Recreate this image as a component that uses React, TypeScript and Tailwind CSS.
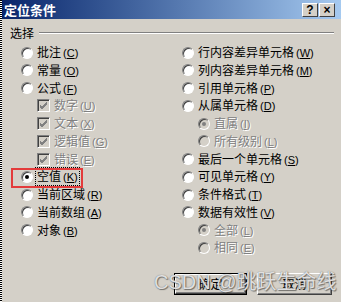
import React from 'react';

type Opt = { t: string; k: string; kind?: 'radio' | 'check'; sub?: boolean; on?: boolean; off?: boolean; focus?: boolean };

const left: Opt[] = [
  { t: '批注', k: 'C' },
  { t: '常量', k: 'O' },
  { t: '公式', k: 'F' },
  { t: '数字', k: 'U', kind: 'check', sub: true, on: true, off: true },
  { t: '文本', k: 'X', kind: 'check', sub: true, on: true, off: true },
  { t: '逻辑值', k: 'G', kind: 'check', sub: true, on: true, off: true },
  { t: '错误', k: 'E', kind: 'check', sub: true, on: true, off: true },
  { t: '空值', k: 'K', on: true, focus: true },
  { t: '当前区域', k: 'R' },
  { t: '当前数组', k: 'A' },
  { t: '对象', k: 'B' },
];

const right: Opt[] = [
  { t: '行内容差异单元格', k: 'W' },
  { t: '列内容差异单元格', k: 'M' },
  { t: '引用单元格', k: 'P' },
  { t: '从属单元格', k: 'D' },
  { t: '直属', k: 'I', sub: true, on: true, off: true },
  { t: '所有级别', k: 'L', sub: true, off: true },
  { t: '最后一个单元格', k: 'S' },
  { t: '可见单元格', k: 'Y' },
  { t: '条件格式', k: 'T' },
  { t: '数据有效性', k: 'V' },
  { t: '全部', k: 'L', sub: true, on: true, off: true },
  { t: '相同', k: 'E', sub: true, off: true },
];

const Radio = ({ on, off }: { on?: boolean; off?: boolean }) => (
  <span
    className={`relative inline-block h-[12px] w-[12px] shrink-0 rounded-full border border-t-[#808080] border-l-[#808080] border-b-white border-r-white shadow-[inset_1px_1px_0_#404040] ${off ? 'bg-[#d4d0c8]' : 'bg-white'}`}
  >
    {on && <span className={`absolute left-[3px] top-[3px] h-[4px] w-[4px] rounded-full ${off ? 'bg-[#808080]' : 'bg-black'}`} />}
  </span>
);

const Check = () => (
  <span className="relative inline-block h-[13px] w-[13px] shrink-0 border border-t-[#808080] border-l-[#808080] border-b-white border-r-white bg-[#d4d0c8] shadow-[inset_1px_1px_0_#404040]">
    <svg width="11" height="11" viewBox="0 0 11 11" className="absolute left-0 top-0">
      <path d="M2 5 L4 7 L9 2 M2 6 L4 8 L9 3 M2 7 L4 9 L9 4" stroke="#808080" strokeWidth="1" fill="none" />
    </svg>
  </span>
);

const Row = ({ o }: { o: Opt }) => (
  <div className={`flex h-[17.75px] items-center gap-[4px] ${o.sub ? 'pl-[16px]' : ''}`}>
    {o.kind === 'check' ? <Check /> : <Radio on={o.on} off={o.off} />}
    <span
      className={`flex items-baseline leading-[14px] ${o.off ? 'text-[#808080] [text-shadow:1px_1px_0_#fff]' : 'text-black'} ${o.focus ? 'outline-1 outline-dotted outline-black outline-offset-[1px]' : ''}`}
    >
      <span>{o.t}</span>
      <span className="ml-[2px] font-['Liberation_Sans',sans-serif] text-[11px]">
        (<u>{o.k}</u>)
      </span>
    </span>
  </div>
);

const Btn = ({ label, def }: { label: string; def?: boolean }) => (
  <div className={`${def ? 'border border-black' : ''} h-[22px]`}>
    <div
      className={`flex h-full items-center justify-center border border-t-white border-l-white border-b-[#404040] border-r-[#404040] bg-[#d4d0c8] shadow-[inset_-1px_-1px_0_#808080] text-[12px] ${def ? 'w-[71px]' : 'w-[75px]'}`}
    >
      {label}
    </div>
  </div>
);

export default function App() {
  return (
    <div className="relative h-[302px] w-[341px] overflow-hidden bg-[#d4d0c8] font-['Noto_Sans_CJK_SC',sans-serif] text-[12px]">
      <div className="flex h-[19px] items-center justify-between bg-linear-to-r from-[#0a246a] to-[#a6caf0] pl-[4px] pr-[6px]">
        <span className="text-[13px] font-bold leading-none text-white">定位条件</span>
        <div className="flex gap-[1px]">
          {['?', '×'].map((g) => (
            <div
              key={g}
              className="flex h-[14px] w-[16px] items-center justify-center border border-t-white border-l-white border-b-[#404040] border-r-[#404040] bg-[#d4d0c8] font-['Liberation_Sans',sans-serif] text-[12px] font-bold leading-none text-black"
            >
              {g}
            </div>
          ))}
        </div>
      </div>

      <div className="flex h-[16px] items-center pl-[10px] pr-[7px] pt-0 mt-[6px]">
        <span className="leading-[14px]">选择</span>
        <div className="ml-[5px] h-[2px] flex-1 border-t border-t-[#808080] border-b border-b-white" />
      </div>

      <div className="mt-[2.8px] grid grid-cols-[161px_1fr] pl-[21px]">
        <div>
          {left.map((o) => (
            <Row key={o.t} o={o} />
          ))}
        </div>
        <div>
          {right.map((o) => (
            <Row key={o.t} o={o} />
          ))}
        </div>
      </div>

      <div className="mt-[16px] flex justify-end gap-[10px] pr-[9px]">
        <Btn label="确定" def />
        <Btn label="取消" />
      </div>

      <div className="absolute left-0 top-0 h-full w-[2px] bg-[repeating-linear-gradient(to_bottom,#000_0_1px,#fff_1px_2px)]" />
      <div className="absolute left-[11px] top-[168px] h-[20px] w-[72px] border-2 border-[#e33b3b]" />
      <div className="pointer-events-none absolute left-[154px] top-[270px] text-[20px] leading-[24px] text-white/80 [text-shadow:0_0_1px_#555,1px_1px_1px_rgba(0,0,0,0.45)] font-['Liberation_Sans','Noto_Sans_CJK_SC',sans-serif]">
        CSDN @跳跃生命线
      </div>
    </div>
  );
}
